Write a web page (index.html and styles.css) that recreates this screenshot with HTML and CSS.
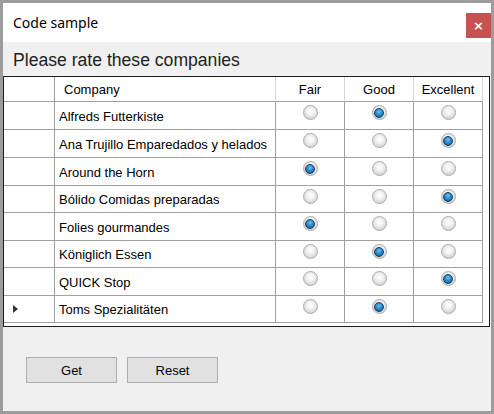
FILE: index.html
```html
<!DOCTYPE html>
<html>
<head>
<meta charset="utf-8">
<link rel="stylesheet" href="styles.css">
</head>
<body>
<div class="window">
  <div class="titlebar">
    <span class="title">Code sample</span>
    <span class="close">×</span>
  </div>
  <div class="content">
    <div class="heading">Please rate these companies</div>
    <div class="grid">
      <div class="row head">
        <div class="cell rh"></div>
        <div class="cell name">Company</div>
        <div class="cell c">Fair</div>
        <div class="cell c">Good</div>
        <div class="cell c">Excellent</div>
      </div>
      <div class="row h28">
        <div class="cell rh"></div>
        <div class="cell name">Alfreds Futterkiste</div>
        <div class="cell r"><span class="radio"></span></div>
        <div class="cell r"><span class="radio on"></span></div>
        <div class="cell r"><span class="radio"></span></div>
      </div>
      <div class="row h28">
        <div class="cell rh"></div>
        <div class="cell name">Ana Trujillo Emparedados y helados</div>
        <div class="cell r"><span class="radio"></span></div>
        <div class="cell r"><span class="radio"></span></div>
        <div class="cell r"><span class="radio on"></span></div>
      </div>
      <div class="row h28">
        <div class="cell rh"></div>
        <div class="cell name">Around the Horn</div>
        <div class="cell r"><span class="radio on"></span></div>
        <div class="cell r"><span class="radio"></span></div>
        <div class="cell r"><span class="radio"></span></div>
      </div>
      <div class="row h27">
        <div class="cell rh"></div>
        <div class="cell name">Bólido Comidas preparadas</div>
        <div class="cell r"><span class="radio"></span></div>
        <div class="cell r"><span class="radio"></span></div>
        <div class="cell r"><span class="radio on"></span></div>
      </div>
      <div class="row h28">
        <div class="cell rh"></div>
        <div class="cell name">Folies gourmandes</div>
        <div class="cell r"><span class="radio on"></span></div>
        <div class="cell r"><span class="radio"></span></div>
        <div class="cell r"><span class="radio"></span></div>
      </div>
      <div class="row h27">
        <div class="cell rh"></div>
        <div class="cell name">Königlich Essen</div>
        <div class="cell r"><span class="radio"></span></div>
        <div class="cell r"><span class="radio on"></span></div>
        <div class="cell r"><span class="radio"></span></div>
      </div>
      <div class="row h28">
        <div class="cell rh"></div>
        <div class="cell name">QUICK Stop</div>
        <div class="cell r"><span class="radio"></span></div>
        <div class="cell r"><span class="radio"></span></div>
        <div class="cell r"><span class="radio on"></span></div>
      </div>
      <div class="row h27">
        <div class="cell rh"><span class="arrow"></span></div>
        <div class="cell name">Toms Spezialitäten</div>
        <div class="cell r"><span class="radio"></span></div>
        <div class="cell r"><span class="radio on"></span></div>
        <div class="cell r"><span class="radio"></span></div>
      </div>
    </div>
    <div class="buttons">
      <button class="btn">Get</button>
      <button class="btn">Reset</button>
    </div>
  </div>
</div>
</body>
</html>
```
FILE: styles.css
```css
html, body {
  margin: 0;
  padding: 0;
}
body {
  background: #ffffff;
}
.window {
  box-sizing: border-box;
  width: 494px;
  height: 414px;
  border: 3px solid #9c9c9c;
  display: flex;
  flex-direction: column;
  background: #f0f0f0;
}
.titlebar {
  height: 39px;
  background: #ffffff;
  display: flex;
  align-items: flex-start;
  justify-content: space-between;
}
.title {
  font-family: "Noto Sans", sans-serif;
  font-size: 14px;
  color: #000;
  margin-left: 10px;
  margin-top: 10px;
}
.close {
  width: 25px;
  height: 25px;
  margin-top: 10px;
  background: #c75050;
  color: #fff;
  font-family: "DejaVu Sans", sans-serif;
  font-size: 13px;
  font-weight: bold;
  display: flex;
  align-items: center;
  justify-content: center;
}
.content {
  flex: 1;
  display: flex;
  flex-direction: column;
}
.heading {
  font-family: "Liberation Sans", sans-serif;
  font-size: 17.6px;
  color: #1e1e1e;
  height: 34px;
  padding-left: 10px;
  box-sizing: border-box;
  padding-top: 8px;
}
.grid {
  width: 487px;
  height: 251px;
  box-sizing: border-box;
  border: 1px solid #1e1e1e;
  background: #ffffff;
  font-family: "Liberation Sans", sans-serif;
  font-size: 13px;
  color: #000;
}
.row {
  display: grid;
  grid-template-columns: 51px 221px 69px 69px 69px;
  width: 479px;
}
.row.head { height: 25px; }
.row.h28 { height: 28px; }
.row.h27 { height: 27px; }
.cell {
  box-sizing: border-box;
  border-right: 1px solid #a0a0a0;
  border-bottom: 1px solid #a0a0a0;
  display: flex;
  align-items: center;
}
.head .cell {
  border-right-color: #d6d6d6;
}
.head .cell.rh {
  border-right-color: #a0a0a0;
}
.name {
  padding-left: 4px;
  padding-top: 1px;
  white-space: nowrap;
}
.head .name {
  padding-left: 9px;
}
.c {
  justify-content: center;
}
.r {
  justify-content: center;
  align-items: flex-start;
  padding-top: 3px;
}
.radio {
  box-sizing: border-box;
  width: 15px;
  height: 15px;
  border-radius: 50%;
  border: 1px solid #acacac;
  background: radial-gradient(circle at 50% 40%, #ffffff 0%, #f2f2f2 35%, #d8d8d8 70%, #c8c8c8 100%);
  display: flex;
  align-items: center;
  justify-content: center;
}
.radio.on::after {
  content: "";
  width: 8px;
  height: 8px;
  border-radius: 50%;
  border: 1px solid #1c3d5c;
  background: radial-gradient(circle at 50% 35%, #6fc3f0 0%, #2a8ccc 45%, #10507e 100%);
}
.rh {
  justify-content: flex-start;
}
.arrow {
  width: 0;
  height: 0;
  margin-left: 9px;
  border-top: 4.5px solid transparent;
  border-bottom: 4.5px solid transparent;
  border-left: 5px solid #333;
}
.buttons {
  display: flex;
  gap: 10px;
  padding-left: 23px;
  margin-top: 30px;
}
.btn {
  box-sizing: border-box;
  width: 91px;
  height: 26px;
  margin: 0;
  border: 1px solid #adadad;
  background: #e1e1e1;
  font-family: "Liberation Sans", sans-serif;
  font-size: 13px;
  color: #000;
  padding: 0;
}
```
